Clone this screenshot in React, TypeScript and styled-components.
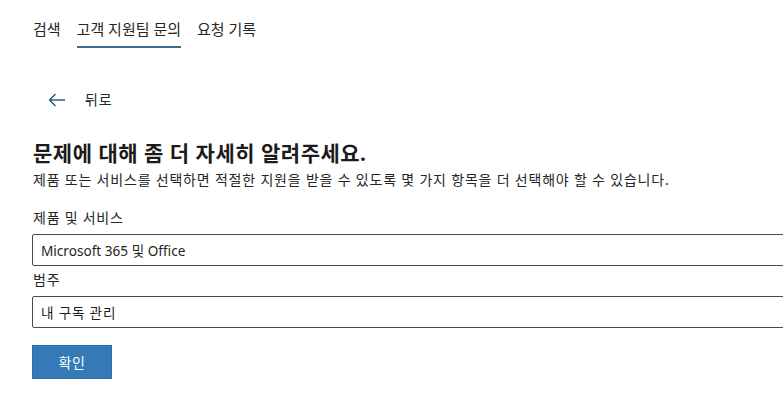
import { FC } from "react";
import styled, { createGlobalStyle } from "styled-components";

const GlobalStyle = createGlobalStyle`
  html, body {
    margin: 0;
    padding: 0;
    background: #fff;
    overflow: hidden;
  }
  body {
    font-family: "Segoe UI", "Noto Sans", "Noto Sans CJK KR", sans-serif;
    color: #262626;
  }
`;

const Page = styled.div`
  width: 783px;
  height: 412px;
  overflow: hidden;
`;

const Tabs = styled.nav`
  display: flex;
  gap: 16px;
  padding-left: 33px;
  height: 48px;
`;

const Tab = styled.div<{ $active?: boolean }>`
  font-size: 15px;
  letter-spacing: 0;
  line-height: 20px;
  padding-top: 19px;
  height: 27px;
  box-sizing: content-box;
  color: #262626;
  border-bottom: 2px solid ${(p) => (p.$active ? "#3a6a90" : "transparent")};
`;

const Content = styled.main`
  padding: 42px 0 0 33px;
`;

const BackLink = styled.a`
  display: flex;
  align-items: center;
  gap: 20px;
  margin-left: 15px;
  height: 20px;
  font-size: 14px;
  letter-spacing: 0.8px;
  line-height: 20px;
  color: #262626;
  text-decoration: none;
`;

const Heading = styled.h1`
  margin: 30px 0 0;
  font-size: 21px;
  letter-spacing: 0.5px;
  line-height: 26px;
  font-weight: 700;
  color: #1b1b1b;
`;

const Intro = styled.p`
  margin: 4px 0 0;
  font-size: 14px;
  letter-spacing: 0.8px;
  line-height: 20px;
  color: #262626;
`;

const Field = styled.div<{ $first?: boolean }>`
  display: flex;
  flex-direction: column;
  margin-top: ${(p) => (p.$first ? "18px" : "4px")};
`;

const Label = styled.label`
  font-size: 14px;
  letter-spacing: 0.75px;
  line-height: 20px;
  color: #262626;
`;

const SelectBox = styled.div`
  margin: 6px 0 0 -1px;
  width: 800px;
  height: 30px;
  display: flex;
  align-items: center;
  padding-left: 8px;
  border: 1px solid #4a4a4a;
  border-radius: 2px;
  font-size: 13.6px;
  color: #1f1f1f;

  .ko {
    letter-spacing: 0.8px;
  }
`;

const Button = styled.button`
  margin: 17px 0 0 -1px;
  width: 80px;
  height: 34px;
  background: #337ab7;
  border: 1px solid #2e6da4;
  color: #fff;
  font-family: inherit;
  font-size: 14px;
  letter-spacing: 0.6px;
  cursor: pointer;
`;

const ArrowLeft: FC = () => (
  <svg width="17" height="14" viewBox="0 0 17 14" fill="none">
    <path
      d="M16.5 7H1.5M7 1.5L1.5 7L7 12.5"
      stroke="#2f5d80"
      strokeWidth="1.6"
      strokeLinecap="round"
      strokeLinejoin="round"
    />
  </svg>
);

const App: FC = () => (
  <Page>
    <GlobalStyle />
    <Tabs>
      <Tab>검색</Tab>
      <Tab $active>고객 지원팀 문의</Tab>
      <Tab>요청 기록</Tab>
    </Tabs>
    <Content>
      <BackLink href="#">
        <ArrowLeft />
        뒤로
      </BackLink>
      <Heading>문제에 대해 좀 더 자세히 알려주세요.</Heading>
      <Intro>
        제품 또는 서비스를 선택하면 적절한 지원을 받을 수 있도록 몇 가지 항목을 더 선택해야 할 수 있습니다.
      </Intro>
      <Field $first>
        <Label>제품 및 서비스</Label>
        <SelectBox>Microsoft 365 및 Office</SelectBox>
      </Field>
      <Field>
        <Label>범주</Label>
        <SelectBox>
          <span className="ko">내 구독 관리</span>
        </SelectBox>
      </Field>
      <Button>확인</Button>
    </Content>
  </Page>
);

export default App;
